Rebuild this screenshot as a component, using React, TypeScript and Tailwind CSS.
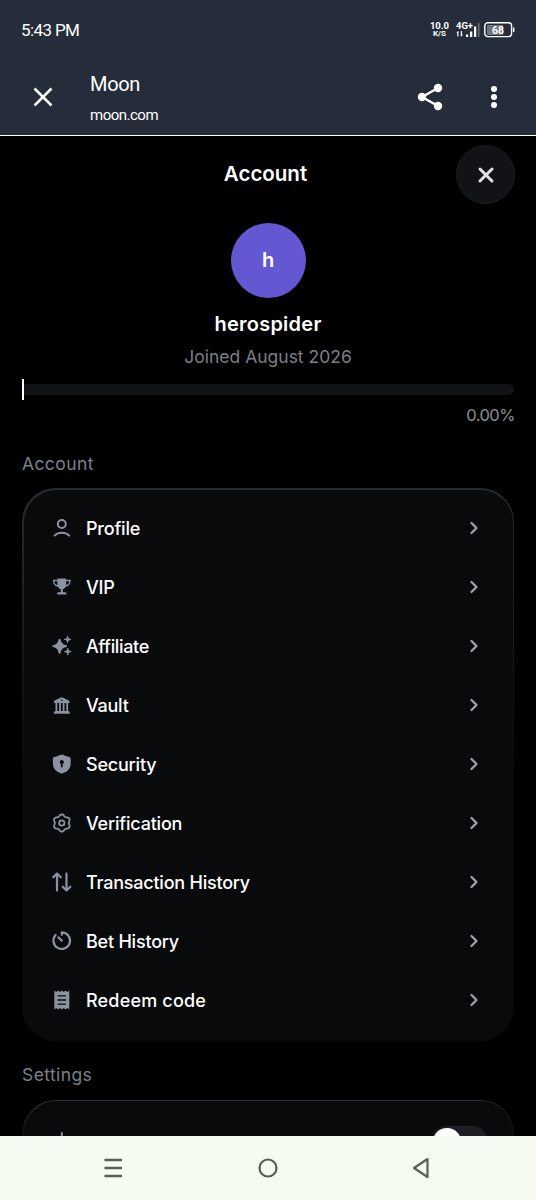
import React, { useState } from 'react';
import { ChevronRight, X } from 'lucide-react';

interface MenuItem {
  label: string;
  icon: React.ReactNode;
  tracking: string;
}

function Icon({ children }: { children: React.ReactNode }) {
  return (
    <svg width="24" height="24" viewBox="0 0 24 24" fill="none" className="shrink-0">
      {children}
    </svg>
  );
}

const stroke = {
  stroke: 'currentColor',
  strokeWidth: 2,
  strokeLinecap: 'round' as const,
  strokeLinejoin: 'round' as const,
};

// Six-lobed gear outline
const gearPoints = Array.from({ length: 72 }, (_, i) => {
  const angle = (i / 72) * Math.PI * 2;
  const radius = 7.8 + 0.85 * Math.cos(6 * angle);
  return `${(11.8 + radius * Math.sin(angle)).toFixed(2)},${(12 - radius * Math.cos(angle)).toFixed(2)}`;
}).join(' ');

const menuItems: MenuItem[] = [
  {
    label: 'Profile',
    tracking: 'tracking-[-0.2px]',
    icon: (
      <Icon>
        <circle cx="11.8" cy="8" r="4" {...stroke} />
        <path d="M4.6 19.6C8.4 15.9 15.4 15.9 19.2 19.6" {...stroke} />
      </Icon>
    ),
  },
  {
    label: 'VIP',
    tracking: 'tracking-[-0.2px]',
    icon: (
      <Icon>
        <path d="M7.500 3.400h8.600v1.400h4.600c0 4.200-1.600 6.400-5.100 6.900-.7 1.400-1.600 2.200-2.800 2.600v3h2.400c.8 0 1.200.5 1.200 1.300v.9H7.200v-.9c0-.8.4-1.300 1.200-1.300h2.400v-3c-1.200-.4-2.100-1.200-2.800-2.600-3.500-.5-5.100-2.700-5.100-6.900h4.600zM4.300 6.200c.2 2.100 1 3.400 3.100 3.900V6.200zm11.800 0v3.900c2.100-.5 3-1.800 3.200-3.900z" fill="currentColor" fillRule="evenodd" />
      </Icon>
    ),
  },
  {
    label: 'Affiliate',
    tracking: 'tracking-[-0.35px]',
    icon: (
      <Icon>
        <path d="M9.600 4.700c.5 0 .8.3 1 .9.9 3.600 2 4.700 5.600 5.700.6.2.9.4.9.9s-.3.8-.9.9c-3.600 1-4.700 2.100-5.600 5.700-.2.6-.5.9-1 .9s-.8-.3-1-.9c-.9-3.600-2-4.700-5.400-5.700-.6-.1-.9-.4-.9-.9s.3-.7.9-.9c3.400-1 4.500-2.100 5.400-5.700.2-.6.5-.9 1-.9z" fill="currentColor" />
        <path d="M17.600 1.900c.5 2.400 1 3 3.400 3.500-2.400.5-2.900 1-3.400 3.500-.5-2.500-1-3-3.400-3.500 2.400-.5 2.900-1.100 3.400-3.500zM17.800 14.100c.5 2.400 1 3 3.400 3.500-2.400.5-2.900 1-3.400 3.500-.5-2.500-1-3-3.400-3.500 2.400-.5 2.900-1.100 3.400-3.500z" fill="currentColor" stroke="currentColor" strokeWidth=".8" strokeLinejoin="round" />
      </Icon>
    ),
  },
  {
    label: 'Vault',
    tracking: 'tracking-[-0.25px]',
    icon: (
      <Icon>
        <path d="M11 4.400q.8-.4 1.600 0l6.300 3.100q.6.300.6 1.100v1.300H4.100V8.600q0-.8.600-1.100zM11.800 6.500a.8.8 0 1 0 0 1.600.8.8 0 0 0 0-1.600zM3.800 20.800v-1q0-1.700 1.700-1.700h12.600q1.700 0 1.700 1.700v1z" fill="currentColor" fillRule="evenodd" />
        <path d="M6.400 9.500v9M10 9.500v9M13.600 9.500v9M17.200 9.500v9" stroke="currentColor" strokeWidth="1.800" />
      </Icon>
    ),
  },
  {
    label: 'Security',
    tracking: 'tracking-[-0.2px]',
    icon: (
      <Icon>
        <path d="M11.800 2.500l7.300 2.400c1.100.4 1.600 1 1.600 2v4.400c0 5.300-3 8.400-8.900 10.400-5.900-2-8.900-5.100-8.900-10.400V6.900c0-1 .5-1.600 1.600-2zM11.800 8a2.100 2.100 0 0 0-.9 4v3.300h1.800V12a2.100 2.100 0 0 0-.9-4z" fill="currentColor" fillRule="evenodd" />
      </Icon>
    ),
  },
  {
    label: 'Verification',
    tracking: 'tracking-[-0.2px]',
    icon: (
      <Icon>
        <polygon points={gearPoints} {...stroke} strokeWidth={1.800} />
        <circle cx="11.8" cy="12" r="2.700" {...stroke} strokeWidth={1.800} />
      </Icon>
    ),
  },
  {
    label: 'Transaction History',
    tracking: 'tracking-[-0.22px]',
    icon: (
      <Icon>
        <path d="M7 20.500V3.700M3.200 7.300L7 3.500l3.800 3.800M16.500 3.500v16.800M12.700 16.700l3.800 3.800 3.800-3.800" {...stroke} strokeWidth={2.200} />
      </Icon>
    ),
  },
  {
    label: 'Bet History',
    tracking: 'tracking-[-0.22px]',
    icon: (
      <Icon>
        <path d="M11.800 5.800V3.300a8.300 8.300 0 1 1-6.200 2.700M8.300 8.300l3.500 3.300" {...stroke} strokeWidth={2.200} />
      </Icon>
    ),
  },
  {
    label: 'Redeem code',
    tracking: 'tracking-[0.18px]',
    icon: (
      <Icon>
        <path d="M4.300 2.500l1.900 1.400 1.900-1.400 1.800 1.400 1.900-1.400 1.900 1.400 1.800-1.400 1.900 1.400 1.900-1.400v19l-1.900-1.400-1.900 1.400-1.800-1.400-1.900 1.400-1.900-1.400-1.800 1.400-1.900-1.400-1.900 1.400zM7.600 7.200v1.400h8.400V7.200zm0 4.100v1.400h8.400v-1.400zm0 4.100v1.400h8.400v-1.400z" fill="currentColor" fillRule="evenodd" />
      </Icon>
    ),
  },
];

function StatusBar() {
  return (
    <div className="flex h-[60px] items-center justify-between pl-[21px] pr-[21px]">
      <span className="pt-px text-[17px] leading-none tracking-[-0.6px]">5:43 PM</span>
      <div className="flex items-center">
        <div className="mr-[7px] flex flex-col items-center text-[9.500px] font-bold leading-[8px]">
          <span>10.0</span>
          <span className="text-[8px]">K/S</span>
        </div>
        <svg width="24" height="16" viewBox="0 0 24 16" className="mr-[4px]" fill="currentColor">
          <text x="0" y="7" fontSize="9" fontWeight="700" textLength="17" lengthAdjust="spacingAndGlyphs">4G+</text>
          <path d="M2 9L0.300 10.900H1.300V14.500H2.500V9zM5.300 14.500l1.800-1.900H6V9H4.800v5.500z" />
          <path d="M10 12.500h2.200V15H10zM14 9.500h2.300V15H14zM18 4.500h2.200V15H18z" />
          <path d="M21.800 1h1.700v14h-1.700z" opacity=".3" />
        </svg>
        <svg width="31" height="16" viewBox="0 0 31 16" fill="none">
          <rect x="3" y="3" width="16" height="10" fill="#6f747d" />
          <rect x=".8" y=".8" width="26.800" height="13.800" rx="3" stroke="currentColor" strokeWidth="1.400" />
          <path d="M29.700 5.500v4.500" stroke="currentColor" strokeWidth="1.400" />
          <text x="14" y="11.500" fontSize="10.500" fontWeight="700" textAnchor="middle" fill="currentColor">68</text>
        </svg>
      </div>
    </div>
  );
}

function BrowserBar() {
  return (
    <div className="flex h-[75px] items-center pl-[33px] pr-[38px]">
      <svg width="20" height="20" viewBox="0 0 20 20" fill="none" className="-mt-px">
        <path d="M1.500 1.500l17 17M18.500 1.500l-17 17" stroke="currentColor" strokeWidth="2.500" />
      </svg>
      <div className="ml-[37px] flex-1 pt-[3px]">
        <div className="text-[20px] leading-6 tracking-[-0.3px]">Moon</div>
        <div className="mt-[7px] text-[15px] leading-6 tracking-[-0.5px]">moon.com</div>
      </div>
      <svg width="26" height="28" viewBox="0 0 26 28" fill="currentColor" className="-mt-px mr-[48px]">
        <path d="M21 5L5 14l16 9" fill="none" stroke="currentColor" strokeWidth="2.400" />
        <circle cx="21" cy="5" r="4.200" />
        <circle cx="5" cy="14" r="4.200" />
        <circle cx="21" cy="23" r="4.200" />
      </svg>
      <svg width="8" height="24" viewBox="0 0 8 24" fill="currentColor" className="-mt-px mr-[-1px]">
        <circle cx="3" cy="4" r="3" />
        <circle cx="3" cy="12" r="3" />
        <circle cx="3" cy="20" r="3" />
      </svg>
    </div>
  );
}

function Card({ children }: { children: React.ReactNode }) {
  return (
    <div className="rounded-[34px] bg-linear-to-b from-[#2b2c31] to-[#090a0c] to-50% p-[1.5px]">
      <div className="rounded-[32.500px] bg-[#090a0c] px-[26.500px] pt-[9px] pb-[9.500px]">{children}</div>
    </div>
  );
}

function ProfileSummary() {
  return (
    <section className="flex flex-col items-center">
      <div className="flex size-[75px] items-center justify-center rounded-full bg-[#6457d2] pb-0.5 text-xl font-semibold">h</div>
      <div className="mt-[13px] text-[20px] font-semibold leading-[26px] tracking-[0.25px]">herospider</div>
      <div className="mt-[7px] text-[17.500px] leading-[26px] text-[#7c7f88]">Joined August 2026</div>
      <div className="mt-[9px] flex h-[21px] w-full items-center">
        <div className="h-[21px] w-[2px] bg-white" />
        <div className="h-[11px] flex-1 rounded-r-full bg-[#121316]" />
      </div>
      <div className="mt-[2px] -mr-px self-end text-[16.500px] leading-[26px] tracking-[-0.5px] text-[#8d9097]">0.00%</div>
    </section>
  );
}

function NavigationBar() {
  return (
    <nav className="flex h-16 shrink-0 items-center justify-between bg-[#f5fbf1] pl-[103px] pr-[105px] text-[#5a5e59]">
      <svg width="20" height="22" viewBox="0 0 20 22" stroke="currentColor" strokeWidth="2.400">
        <path d="M1.500 3h17.500M1.500 11h17.500M1.500 19h17.500" />
      </svg>
      <svg width="20" height="20" viewBox="0 0 20 20" fill="none" stroke="currentColor" strokeWidth="2.200" className="ml-[2px]">
        <circle cx="10" cy="10" r="8.500" />
      </svg>
      <svg width="20" height="22" viewBox="0 0 20 22" fill="none" stroke="currentColor" strokeWidth="2.200" strokeLinejoin="round">
        <path d="M16.500 2L3 11l13.500 9z" />
      </svg>
    </nav>
  );
}

export default function App() {
  const [enabled, setEnabled] = useState(false);

  return (
    <div className="flex h-[1200px] w-[536px] flex-col overflow-hidden bg-black text-white">
      <header className="h-[136px] shrink-0 border-b border-white bg-[#262d3a] font-[Roboto,sans-serif]">
        <StatusBar />
        <BrowserBar />
      </header>

      <main className="min-h-0 flex-1 overflow-hidden px-[22px] pt-[9px] font-[Inter,sans-serif]">
        <div className="flex h-[59px] items-center">
          <h1 className="flex-1 pb-px pl-[53px] text-center text-[20.500px] font-semibold">Account</h1>
          <button aria-label="Close" className="-mr-px flex size-[59px] items-center justify-center rounded-full border border-[#1c1d20] bg-[#121316] text-[#e0e1e3]">
            <X size={24} strokeWidth={3} />
          </button>
        </div>

        <div className="mt-[19px]">
          <ProfileSummary />
        </div>

        <h2 className="mt-[23px] text-[17.500px] leading-[26px] tracking-[0.4px] text-[#7c808b]">Account</h2>
        <div className="mt-[11px]">
          <Card>
            {menuItems.map((item) => (
              <button key={item.label} className="flex h-[59px] w-full items-center gap-3 text-left">
                <span className="text-[#8b92a0]">{item.icon}</span>
                <span className={`flex-1 text-[18px] font-medium ${item.tracking}`}>{item.label}</span>
                <ChevronRight size={20} strokeWidth={2.700} className="mr-[2px] text-[#a0a3aa]" />
              </button>
            ))}
          </Card>
        </div>

        <h2 className="mt-[21px] text-[17.500px] leading-[26px] tracking-[0.4px] text-[#7c808b]">Settings</h2>
        <div className="mt-[12px]">
          <Card>
            <div className="flex h-[64px] items-center justify-between">
              <svg width="24" height="24" viewBox="0 0 24 24" fill="none" className="text-[#8b92a0]">
                <path d="M11.800 3v3M3 20L9.500 7h4.600L21 20" {...stroke} />
              </svg>
              <button
                onClick={() => setEnabled(!enabled)}
                aria-label="Toggle setting"
                className={`-mr-[2px] flex h-8 w-[57px] items-center rounded-full bg-[#1d1e24] px-[2px] ${enabled ? 'justify-end' : 'justify-start'}`}
              >
                <span className="size-7 rounded-full bg-white" />
              </button>
            </div>
          </Card>
        </div>
      </main>

      <NavigationBar />
    </div>
  );
}
